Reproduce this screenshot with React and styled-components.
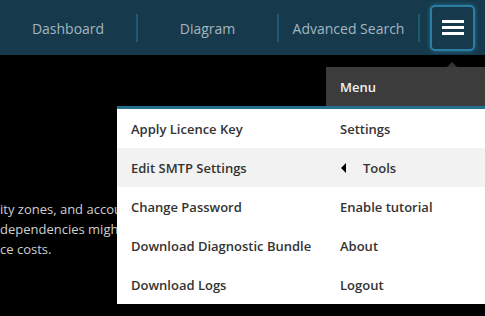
import React from 'react';
import styled, { createGlobalStyle } from 'styled-components';

const GlobalStyle = createGlobalStyle`
  html, body {
    margin: 0;
    padding: 0;
    background: #000;
    font-family: "Open Sans", "Liberation Sans", sans-serif;
  }
`;

const Page = styled.div`
  position: relative;
  width: 485px;
  height: 316px;
  overflow: hidden;
  background: #000;
`;

const TopBar = styled.header`
  display: flex;
  align-items: center;
  height: 55px;
  background: #163a4c;
`;

const NavItem = styled.div`
  width: ${(p) => p.$width || 139}px;
  flex-shrink: 0;
  padding-top: 2px;
  text-align: center;
  font-size: 14px;
  color: #a3b6c0;
`;

const Divider = styled.div`
  width: 2px;
  height: 28px;
  flex-shrink: 0;
  background: #1d5a74;
`;

const MenuButton = styled.button`
  display: flex;
  flex-direction: column;
  align-items: center;
  justify-content: center;
  gap: 3px;
  width: 45px;
  height: 46px;
  margin-left: 10px;
  padding: 0;
  border: 2px solid #2b7ea2;
  border-radius: 5px;
  background: #163a4c;
  box-shadow: 0 0 4px rgba(47, 143, 185, 0.7);
`;

const Bar = styled.span`
  display: block;
  width: 22px;
  height: 3px;
  background: #fff;
`;

const Content = styled.main`
  width: 117px;
  overflow: hidden;
  padding-top: 144px;
  color: #cfcfcf;
  font-size: 13px;
  line-height: 20px;
  white-space: nowrap;
`;

const Para = styled.p`
  margin: 0;
`;

const Dropdown = styled.div`
  position: absolute;
  top: 62px;
  left: 326px;
  width: 159px;
  padding-top: 5px;
`;

const Caret = styled.div`
  position: absolute;
  top: 0;
  left: 121px;
  width: 0;
  height: 0;
  border-left: 5px solid transparent;
  border-right: 5px solid transparent;
  border-bottom: 5px solid #3c3c3c;
`;

const Panel = styled.div`
  position: relative;
  background: #fff;
  box-shadow: -4px 0 10px rgba(0, 0, 0, 0.35);
`;

const MenuTitle = styled.div`
  height: 39px;
  display: flex;
  align-items: center;
  padding-left: 14px;
  background: #3c3c3c;
  color: #f2f2f2;
  font-size: 13px;
  font-weight: 600;
`;

const List = styled.ul`
  list-style: none;
  margin: 0;
  padding: 0;
  border-top: 3px solid #25708f;
  background: #fff;
`;

const SubMenu = styled(List)`
  position: absolute;
  top: 39px;
  right: 100%;
  width: 209px;
`;

const Item = styled.li`
  display: flex;
  align-items: center;
  gap: 17px;
  height: 39px;
  padding-left: 14px;
  font-size: 13px;
  font-weight: 600;
  color: #333;
  background: ${(p) => (p.$active ? '#f2f2f2' : '#fff')};
`;

const LeftArrow = styled.span`
  width: 0;
  height: 0;
  margin-left: 1px;
  border-top: 5px solid transparent;
  border-bottom: 5px solid transparent;
  border-right: 5px solid #000;
`;

const mainItems = ['Settings', 'Tools', 'Enable tutorial', 'About', 'Logout'];
const toolItems = [
  'Apply Licence Key',
  'Edit SMTP Settings',
  'Change Password',
  'Download Diagnostic Bundle',
  'Download Logs',
];

export default function App() {
  return (
    <Page>
      <GlobalStyle />
      <TopBar>
        <NavItem $width={136}>Dashboard</NavItem>
        <Divider />
        <NavItem>Diagram</NavItem>
        <Divider />
        <NavItem>Advanced Search</NavItem>
        <Divider />
        <MenuButton aria-label="Menu">
          <Bar />
          <Bar />
          <Bar />
        </MenuButton>
      </TopBar>

      <Content>
        <Para>ity zones, and accounts</Para>
        <Para>
          dependencies might increase
          <br />
          ce costs.
        </Para>
      </Content>

      <Dropdown>
        <Caret />
        <Panel>
          <MenuTitle>Menu</MenuTitle>
          <List>
            {mainItems.map((label) => (
              <Item key={label} $active={label === 'Tools'}>
                {label === 'Tools' && <LeftArrow />}
                {label}
              </Item>
            ))}
          </List>
          <SubMenu>
            {toolItems.map((label) => (
              <Item key={label} $active={label === 'Edit SMTP Settings'}>
                {label}
              </Item>
            ))}
          </SubMenu>
        </Panel>
      </Dropdown>
    </Page>
  );
}
